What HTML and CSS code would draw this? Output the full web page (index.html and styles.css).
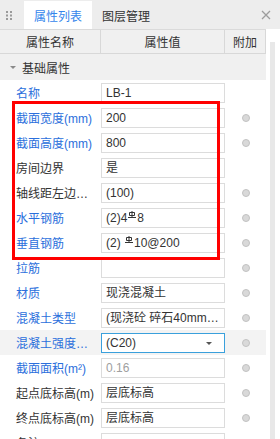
FILE: index.html
```html
<!DOCTYPE html>
<html lang="zh-CN">

<head>
    <meta charset="utf-8">
    <link rel="stylesheet" href="styles.css">
</head>

<body>
    <div class="panel">
        <div class="tabs">
            <span class="grip">
                <svg width="24" height="29" viewBox="0 0 24 29">
                    <g fill="#9a9a9a">
                        <rect x="6" y="11" width="2" height="2" />
                        <rect x="10" y="11" width="2" height="2" />
                        <rect x="6" y="14.5" width="2" height="2" />
                        <rect x="10" y="14.5" width="2" height="2" />
                        <rect x="6" y="18" width="2" height="2" />
                        <rect x="10" y="18" width="2" height="2" />
                    </g>
                </svg>
            </span>
            <span class="tab active">属性列表</span>
            <span class="tab">图层管理</span>
            <span class="close">
                <svg width="10" height="10" viewBox="0 0 10 10">
                    <path d="M1 1L9 9M9 1L1 9" stroke="#9d9d9d" stroke-width="1.3" fill="none" />
                </svg>
            </span>
        </div>

        <div class="body">
            <div class="sheet">
                <div class="head">
                    <div class="hcell">属性名称</div>
                    <div class="hcell">属性值</div>
                    <div class="hcell">附加</div>
                </div>
                <div class="group"><span class="caret"></span>基础属性</div>

                <div class="row">
                    <div class="label blue">名称</div>
                    <div class="field">LB-1</div>
                    <div class="add"></div>
                </div>
                <div class="row">
                    <div class="label blue">截面宽度(mm)</div>
                    <div class="field">200</div>
                    <div class="add"><span class="dot"></span></div>
                </div>
                <div class="row">
                    <div class="label blue">截面高度(mm)</div>
                    <div class="field">800</div>
                    <div class="add"><span class="dot"></span></div>
                </div>
                <div class="row">
                    <div class="label">房间边界</div>
                    <div class="field">是</div>
                    <div class="add"></div>
                </div>
                <div class="row">
                    <div class="label">轴线距左边线距离(mm)</div>
                    <div class="field">(100)</div>
                    <div class="add"><span class="dot"></span></div>
                </div>
                <div class="row">
                    <div class="label blue">水平钢筋</div>
                    <div class="field">(2)4<svg class="bar" width="8" height="7" viewBox="0 0 8 7"><path d="M4 0V6.5M1.5 1.5H6.5V4.5H1.5ZM0 6.5H8" stroke="#333" stroke-width="1" fill="none" /></svg>8</div>
                    <div class="add"><span class="dot"></span></div>
                </div>
                <div class="row">
                    <div class="label blue">垂直钢筋</div>
                    <div class="field">(2) <svg class="bar" width="8" height="7" viewBox="0 0 8 7"><path d="M4 0V6.5M1.5 1.5H6.5V4.5H1.5ZM0 6.5H8" stroke="#333" stroke-width="1" fill="none" /></svg>10@200</div>
                    <div class="add"><span class="dot"></span></div>
                </div>
                <div class="row">
                    <div class="label blue">拉筋</div>
                    <div class="field"></div>
                    <div class="add"><span class="dot"></span></div>
                </div>
                <div class="row">
                    <div class="label blue">材质</div>
                    <div class="field">现浇混凝土</div>
                    <div class="add"><span class="dot"></span></div>
                </div>
                <div class="row">
                    <div class="label blue">混凝土类型</div>
                    <div class="field">(现浇砼 碎石40mm 坍落度35~50)</div>
                    <div class="add"><span class="dot"></span></div>
                </div>
                <div class="row current">
                    <div class="label blue">混凝土强度等级</div>
                    <div class="field select">(C20)<span class="arrow"></span></div>
                    <div class="add"><span class="dot"></span></div>
                </div>
                <div class="row">
                    <div class="label blue">截面面积(m²)</div>
                    <div class="field muted">0.16</div>
                    <div class="add"><span class="dot"></span></div>
                </div>
                <div class="row">
                    <div class="label">起点底标高(m)</div>
                    <div class="field">层底标高</div>
                    <div class="add"><span class="dot"></span></div>
                </div>
                <div class="row">
                    <div class="label">终点底标高(m)</div>
                    <div class="field">层底标高</div>
                    <div class="add"><span class="dot"></span></div>
                </div>
                <div class="row">
                    <div class="label">备注</div>
                    <div class="field"></div>
                    <div class="add"></div>
                </div>
            </div>
            <div class="scroll">
                <div class="thumb"></div>
            </div>
        </div>

        <div class="mark"></div>
    </div>
</body>

</html>
```

FILE: styles.css
```css
html,
body {
    margin: 0;
    padding: 0;
    background: #fff;
    height: 439px;
    overflow: hidden;
}

body {
    font-family: "Liberation Sans", "Noto Sans CJK SC", sans-serif;
    font-size: 12px;
    color: #333;
}

.panel {
    position: relative;
    width: 280px;
    height: 439px;
    overflow: hidden;
}

.tabs {
    display: flex;
    align-items: stretch;
    height: 29px;
    background: #ededed;
}

.grip {
    width: 24px;
    display: flex;
}

.tab {
    display: flex;
    align-items: center;
    padding: 0 10px;
    margin-top: 1px;
    color: #333;
}

.tab.active {
    background: #fff;
    color: #3485ec;
}

.close {
    margin-left: auto;
    width: 28px;
    display: flex;
    align-items: center;
    justify-content: center;
}

.body {
    display: flex;
}

.sheet {
    width: 266px;
    flex: none;
}

.head {
    display: grid;
    grid-template-columns: 101px 124px 41px;
    height: 25px;
    background: #f0f0f0;
    border-top: 1px solid #dadada;
    box-sizing: border-box;
}

.hcell {
    display: flex;
    align-items: center;
    justify-content: center;
    border-right: 1px solid #d8d8d8;
    border-bottom: 1px solid #d8d8d8;
    color: #333;
}

.group {
    display: flex;
    align-items: center;
    height: 26px;
    background: #f0f0f0;
    color: #333;
}

.caret {
    width: 0;
    height: 0;
    margin: 0 6px 0 10px;
    border-left: 3px solid transparent;
    border-right: 3px solid transparent;
    border-top: 3px solid #8a8a8a;
}

.row {
    display: grid;
    grid-template-columns: 101px 124px 41px;
    align-items: center;
    height: 25px;
}

.row.current {
    background: #f3f3f3;
}

.label {
    padding: 0 4px 0 16px;
    white-space: nowrap;
    overflow: hidden;
    text-overflow: ellipsis;
    color: #333;
}

.label.blue {
    color: #2b6fdc;
}

.field {
    position: relative;
    height: 20px;
    line-height: 18px;
    box-sizing: border-box;
    border: 1px solid #dcdcdc;
    background: #fff;
    padding: 0 3px 0 4px;
    white-space: nowrap;
    overflow: hidden;
    text-overflow: ellipsis;
    color: #333;
}

.field.muted {
    color: #a0a0a0;
}

.field.select {
    border-color: #3aa0dc;
}

.arrow {
    position: absolute;
    right: 12px;
    top: 8px;
    width: 0;
    height: 0;
    border-left: 3px solid transparent;
    border-right: 3px solid transparent;
    border-top: 3px solid #555;
}

.bar {
    vertical-align: 4px;
    margin: 0 1px;
}

.add {
    display: flex;
    justify-content: center;
    align-items: center;
}

.dot {
    width: 8px;
    height: 8px;
    box-sizing: border-box;
    border-radius: 50%;
    background: #d9d9d9;
    border: 1px solid #c2c2c2;
}

.scroll {
    flex: 1;
    padding: 13px 0 0 4px;
}

.thumb {
    width: 5px;
    height: 420px;
    background: #e8e8e8;
}

.mark {
    position: absolute;
    left: 12px;
    top: 101px;
    width: 208px;
    height: 159px;
    box-sizing: border-box;
    border: 3px solid #f00;
}
```
